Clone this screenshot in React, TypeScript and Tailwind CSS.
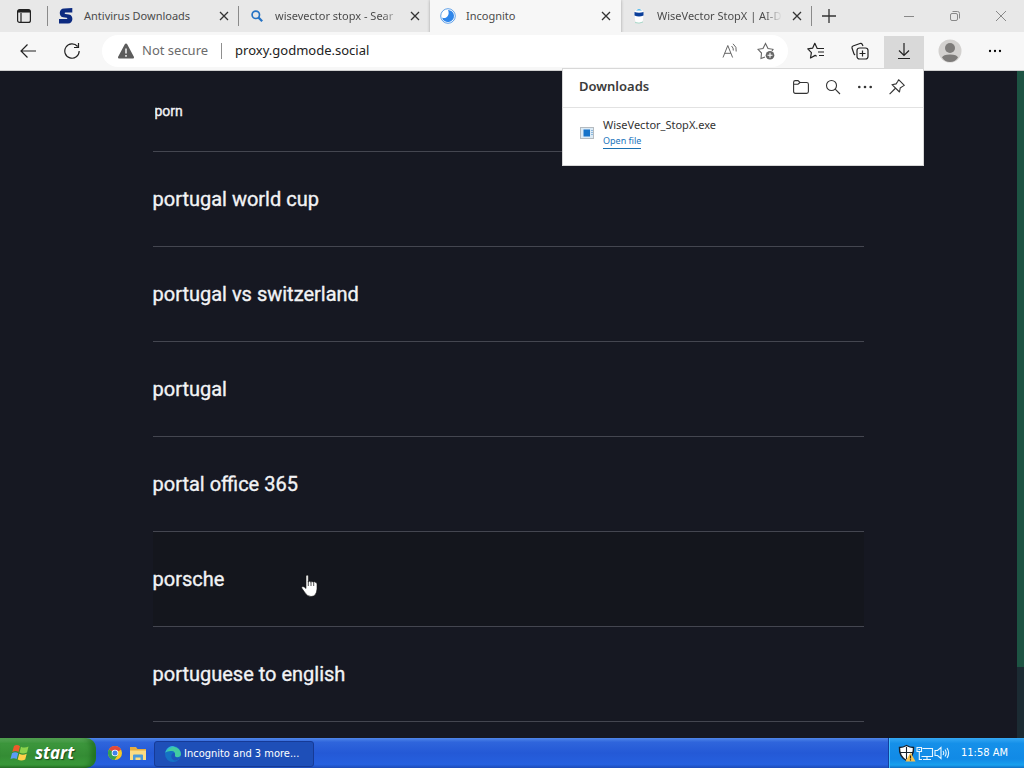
import type { ReactNode } from "react";

function CloseIcon() {
  return (
    <svg viewBox="0 0 10 10" className="size-[10px]" fill="none" stroke="#333" strokeWidth="1.3">
      <path d="M1 1l8 8M9 1l-8 8" />
    </svg>
  );
}

function BladeIcon() {
  return (
    <svg viewBox="0 0 16 18" className="h-[18px] w-4" fill="none">
      <path d="M14.3 1V5.4H7.4C6.400 5.400 6.400 6.900 7.400 7L11 7.600C15.800 8.400 15.600 16.600 10 16.600H1V12H8.600C9.600 12 9.600 11 8.600 10.800L5 10.200C0.400 9.200 .8 1.400 6 1.400Z" fill="#0c2a80" />
    </svg>
  );
}

function SearchFavicon() {
  return (
    <svg viewBox="0 0 16 16" className="size-4" fill="none" stroke="#2673c4">
      <circle cx="6.8" cy="6.8" r="3.7" strokeWidth="1.7" />
      <path d="M9.6 9.6l3.6 3.6" strokeWidth="2.2" />
    </svg>
  );
}

function MoonFavicon() {
  return (
    <svg viewBox="0 0 16 16" className="size-4" fill="none">
      <circle cx="8" cy="8" r="7.3" fill="#fff" stroke="#5d9fe8" strokeWidth="1" />
      <path d="M8 1.900A6.100 6.100 0 1 1 2 9.500C5.500 11.600 10.500 7.400 8 1.900Z" fill="#2f86ea" />
    </svg>
  );
}

function RobotFavicon() {
  return (
    <svg viewBox="0 0 16 16" className="size-4">
      <path d="M3.500 5Q4 1 8 1T12.500 5L12 12Q11.500 15 8 15T4 12Z" fill="#fff" />
      <path d="M4 14.500Q8 16 12 14" stroke="#a9d9c9" fill="none" />
      <path d="M5 2.500Q8 -0.500 11 2.500Z" fill="#49b4e8" />
      <path d="M3.500 4Q8 5.500 12.500 4V7.500Q8 9.500 3.500 7.500Z" fill="#0b3f9a" />
    </svg>
  );
}

type TabProps = { icon: ReactNode; title: string; active?: boolean; divider?: boolean; faded?: boolean };

function Tab({ icon, title, active, divider, faded }: TabProps) {
  return (
    <div
      className={
        "flex min-w-0 flex-1 items-center pl-[10px] pr-2 " +
        (active ? "relative -mb-1 bg-[#f7f7f7] pb-1 shadow-[0_0_3px_rgba(0,0,0,0.3)]" : "")
      }
    >
      <button className="flex min-w-0 flex-1 items-center gap-[10px] text-left">
        <span className="shrink-0">{icon}</span>
        <span
          className={
            "min-w-0 flex-1 whitespace-nowrap " +
            (faded ? "mask-[linear-gradient(to_right,black_calc(100%-18px),transparent)]" : "")
          }
        >
          {title}
        </span>
      </button>
      <button aria-label={"Close " + title} className="ml-2 p-[2px]">
        <CloseIcon />
      </button>
      {divider && <span className="-mr-2 ml-[7px] h-5 w-px bg-[#8a8a8a]" />}
    </div>
  );
}

function TabStrip() {
  return (
    <div className="flex h-8 shrink-0 bg-[#e8e8e8] text-[11px] text-[#4b4b4b]">
      <div className="flex w-12 items-center justify-between pl-4">
        <button aria-label="Tab actions">
          <svg viewBox="0 0 16 16" className="size-4" fill="none" stroke="#222" strokeWidth="1.2">
            <rect x="1.600" y="1.600" width="12.800" height="12.800" rx="2" />
            <path d="M1.500 4H14.500M5 5V14" />
            <path d="M2 3H14" strokeWidth="2.200" />
          </svg>
        </button>
        <span className="h-5 w-px bg-[#8a8a8a]" />
      </div>
      <div className="flex min-w-0 max-w-[764px] flex-1">
        <Tab icon={<BladeIcon />} title="Antivirus Downloads" divider />
        <Tab icon={<SearchFavicon />} title="wisevector stopx - Sear" faded />
        <Tab icon={<MoonFavicon />} title="Incognito" active />
        <Tab icon={<RobotFavicon />} title="WiseVector StopX | AI-D" divider faded />
      </div>
      <button aria-label="New tab" className="ml-[10px]">
        <svg viewBox="0 0 14 14" className="size-[14px]" stroke="#333" strokeWidth="1.300">
          <path d="M7 0V14M0 7H14" />
        </svg>
      </button>
      <div className="ml-auto flex items-center gap-[34px] pr-[17px]">
        <button aria-label="Minimize">
          <svg viewBox="0 0 12 12" className="size-3" stroke="#888"><path d="M1 6.500H11" /></svg>
        </button>
        <button aria-label="Restore">
          <svg viewBox="0 0 12 12" className="size-3" stroke="#888" fill="none">
            <rect x="1.500" y="3.500" width="7" height="7" rx="1.500" />
            <path d="M3.500 1.500H8.500Q10.500 1.500 10.500 3.500V8.500" />
          </svg>
        </button>
        <button aria-label="Close window">
          <svg viewBox="0 0 12 12" className="size-3" stroke="#888"><path d="M1 1L11 11M11 1L1 11" /></svg>
        </button>
      </div>
    </div>
  );
}

function DotsIcon({ className }: { className: string }) {
  return (
    <svg viewBox="0 0 16 16" className={className} fill="currentColor">
      <circle cx="2.300" cy="8" r="1.300" /><circle cx="8" cy="8" r="1.300" /><circle cx="13.700" cy="8" r="1.300" />
    </svg>
  );
}

function DownloadsFlyout() {
  return (
    <section
      aria-label="Downloads"
      className="absolute right-[100px] top-9 z-20 w-[362px] border border-[#d8d8d8] bg-white pb-4 text-[#333]"
    >
      <header className="flex h-[39px] items-center border-b border-[#e2e2e2] pb-[2px] pl-4 pr-[18px]">
        <h2 className="text-[13px] font-semibold text-[#3b3b3b]">Downloads</h2>
        <div className="ml-auto flex items-center gap-4">
          <button aria-label="Open downloads folder">
            <svg viewBox="0 0 16 16" className="size-4" fill="none" stroke="currentColor" strokeWidth="1.100">
              <path d="M.6 3.300Q.6 1.600 2.300 1.600H5L7 3.500H13.600Q15.400 3.500 15.400 5.200V12.600Q15.400 14.400 13.600 14.400H2.400Q.6 14.400 .6 12.600ZM.6 5.200H5L7 3.500" />
            </svg>
          </button>
          <button aria-label="Search downloads">
            <svg viewBox="0 0 16 16" className="size-4" fill="none" stroke="currentColor" strokeWidth="1.100">
              <circle cx="6.500" cy="6.500" r="5" /><path d="M10.200 10.200L15 15" />
            </svg>
          </button>
          <button aria-label="More options"><DotsIcon className="size-4" /></button>
          <button aria-label="Pin downloads">
            <svg viewBox="0 0 16 16" className="size-4" fill="none" stroke="currentColor" strokeWidth="1.100" strokeLinejoin="round">
              <path d="M9.600 .7L15.300 6.400L13.600 7.400L11.200 9L10.500 13L3 5.700L7.100 4.900L8.700 2.500ZM6.200 9.500L.6 15.200" />
            </svg>
          </button>
        </div>
      </header>
      <div className="flex items-center gap-[9px] pl-[17px] pt-[9px]">
        <svg viewBox="0 0 14 12" className="h-3 w-[14px]">
          <rect x=".5" y=".5" width="13" height="11" fill="#dcebf6" stroke="#b5bbc0" />
          <rect x="3.500" y="2.500" width="6.500" height="7" fill="#1673c9" />
          <path d="M11 3.500h2M11 5.500h2M11 7.500h2" stroke="#8db8de" />
        </svg>
        <div className="flex flex-col items-start">
          <span className="text-[11px] leading-4">WiseVector_StopX.exe</span>
          <a href="#" className="border-b border-[#1a6fb0] text-[9px] leading-[15px] text-[#1a75bd]">Open file</a>
        </div>
      </div>
    </section>
  );
}

function Toolbar() {
  return (
    <div className="relative flex h-[39px] shrink-0 items-center border-b border-[#cfcfcf] bg-[#f7f7f7] pl-5 pr-[22px] text-[#222]">
      <button aria-label="Back">
        <svg viewBox="0 0 16 16" className="size-4" fill="none" stroke="currentColor" strokeWidth="1.200"><path d="M16 8H1M7.500 1.500L1 8L7.500 14.500" /></svg>
      </button>
      <button aria-label="Refresh" className="ml-7">
        <svg viewBox="0 0 16 16" className="size-4" fill="none" stroke="currentColor" strokeWidth="1.200"><path d="M15.200 8A7.200 7.200 0 1 1 13.600 3.500M14.500 0V4.500H10" /></svg>
      </button>
      <form className="ml-[22px] flex h-8 min-w-0 flex-1 items-center rounded-full bg-white pl-[15px] pr-[13px] text-[13px]">
        <svg viewBox="0 0 18 16" className="h-4 w-[18px] shrink-0">
          <path d="M9 .5Q9.800 .5 10.200 1.300L17 14Q17.300 15.500 15.800 15.500H2.200Q.7 15.500 1 14L7.800 1.300Q8.200 .5 9 .5Z" fill="#5c5c5c" />
          <path d="M9 5.500V10.500M9 12V13.700" stroke="#fff" strokeWidth="1.400" />
        </svg>
        <span className="ml-[7px] whitespace-nowrap text-[#6b6b6b]">Not secure</span>
        <span className="ml-[13px] h-4 w-px bg-[#8f8f8f]" />
        <input aria-label="Address" defaultValue="proxy.godmode.social" className="ml-[13px] min-w-0 flex-1 bg-transparent text-[#222] outline-none" />
        <button type="button" aria-label="Read aloud" className="text-[#666]">
          <svg viewBox="0 0 16 16" className="size-4" fill="none" stroke="currentColor" strokeWidth="1">
            <path d="M1 14.500L5.800 2.500L10.600 14.500M2.700 10.300H8.900M9.600 3Q11.700 5 11.300 7.500M11 .8Q15.200 4 14.200 8.500" />
          </svg>
        </button>
        <button type="button" aria-label="Add to favorites" className="ml-[19px] text-[#666]">
          <svg viewBox="0 0 18 18" className="size-[18px]" fill="none" stroke="currentColor" strokeWidth="1.100">
            <path d="M8 15L4 16.500L4.500 11L1 7.300L6 6.500L8.500 1.500L11 6.500L16 7.300L15 9" />
            <circle cx="13" cy="13.300" r="4.300" fill="#666" stroke="none" />
            <path d="M13 10.800V15.800M10.500 13.300H15.500" stroke="#fff" />
          </svg>
        </button>
      </form>
      <button aria-label="Favorites" className="ml-[19px]">
        <svg viewBox="0 0 18 18" className="size-[18px]" fill="none" stroke="currentColor" strokeWidth="1.200" strokeLinejoin="round">
          <path d="M17 6.500H10.200L7.800 1.300L5.600 6.200L.8 6.900L4.400 10.600L3.500 16L8.200 13.400L9.700 14.200M11 10H17M12 13.500H17" />
        </svg>
      </button>
      <button aria-label="Collections" className="ml-[26px]">
        <svg viewBox="0 0 18 18" className="size-[18px]" fill="none" stroke="currentColor" strokeWidth="1.200">
          <rect x="6" y="6" width="11" height="11" rx="2.500" />
          <path d="M11.500 8.500V14.500M8.500 11.500H14.500M4 13L3 12L1 6Q.7 4.500 2 4L9 1.500Q10.500 1 11.200 2.300L12 4" />
        </svg>
      </button>
      <button aria-label="Downloads" className="ml-[15px] mt-1 flex h-[35px] w-10 items-center justify-center bg-[#d9d9d9]">
        <svg viewBox="0 0 16 18" className="-mt-1 h-[18px] w-4" fill="none" stroke="currentColor" strokeWidth="1.200">
          <path d="M8 1V13M3 8.500L8 13.500L13 8.500M2 16.500H14" />
        </svg>
      </button>
      <button aria-label="Profile" className="ml-[14px]">
        <svg viewBox="0 0 24 24" className="size-6">
          <circle cx="12" cy="12" r="11.500" fill="#d3d1cf" />
          <circle cx="12" cy="9" r="5" fill="#7d7b79" />
          <path d="M4 18.500Q5 15.500 12 15.500T20 18.500Q17 23 12 23T4 18.500Z" fill="#7d7b79" />
        </svg>
      </button>
      <button aria-label="Settings and more" className="ml-[26px]"><DotsIcon className="size-[14px] text-black" /></button>
      <DownloadsFlyout />
    </div>
  );
}

const suggestions = [
  "portugal world cup",
  "portugal vs switzerland",
  "portugal",
  "portal office 365",
  "porsche",
  "portuguese to english",
];

function Page() {
  return (
    <div className="flex min-h-0 flex-1 bg-[#161822]">
      <main className="min-w-0 flex-1 overflow-hidden pr-px font-[Roboto,sans-serif] text-[#f2f3f5] [-webkit-text-stroke:0.35px_#f2f3f5]">
        <div className="mx-auto max-w-[711px]">
          <div className="flex h-[81px] items-center border-b border-[#444650]">
            <input aria-label="Search" defaultValue="porn" className="w-full bg-transparent pl-[2px] text-[14px] outline-none" />
          </div>
          <ul>
            {suggestions.map((text) => (
              <li key={text}>
                <a
                  href="#"
                  className={
                    "flex h-[95px] items-center border-b border-[#444650] text-[20px] " +
                    (text === "porsche" ? "bg-[#14161d]" : "")
                  }
                >
                  {text}
                </a>
              </li>
            ))}
          </ul>
        </div>
      </main>
      <div className="flex w-[7px] flex-col bg-[#1b2b33]">
        <div className="flex-[25] bg-[#1d5443]" />
        <div className="flex-[3]" />
      </div>
      <svg viewBox="0 0 17 24" className="absolute left-[301px] top-[574px] h-6 w-[17px]">
        <path d="M5 1.500Q6.800 .5 7.300 2V8Q8.500 6.500 9.800 8Q11 6.700 12.300 8.300Q13.500 7.200 15 8.500Q16 9 16 10.500V15Q15.500 22.500 10 22.500Q6 22.500 3.500 18L.7 14Q.3 12.300 2 12.500Q3.500 12.800 5 14.500Z" fill="#fff" stroke="#111" strokeWidth=".6" />
        <path d="M7.300 7V12M10 8V12M12.700 8.500V12" stroke="#222" strokeWidth=".8" />
      </svg>
    </div>
  );
}

function Taskbar() {
  return (
    <footer className="flex h-[30px] shrink-0 items-stretch bg-[linear-gradient(#4f86e8_0%,#2f65dc_14%,#2459d6_50%,#2660df_88%,#1d4bb8_100%)] font-['DejaVu_Sans_Condensed','DejaVu_Sans',sans-serif] text-[11px] text-white">
      <button className="flex w-24 items-center gap-[5px] rounded-r-[10px] bg-[linear-gradient(#5fae5f_0%,#3c963c_18%,#348c34_60%,#3a9a3a_90%,#2a742a_100%)] pl-[10px] shadow-[inset_-5px_0_5px_rgba(0,70,0,0.35)]">
        <svg viewBox="0 0 20 20" className="size-5">
          <path d="M4 3Q7 1 10 3.200L8.500 9Q5.500 7.200 2.300 9Z" fill="#ee5a2b" />
          <path d="M11 3.700Q14.500 5.500 18.500 3.500L17 9.500Q13 11.500 9.500 9.600Z" fill="#8bd24c" />
          <path d="M2 10.200Q5.200 8.500 8.200 10.300L6.700 16Q3.800 14.300 .5 16Z" fill="#5b9cf5" />
          <path d="M9.200 10.800Q13 12.700 16.700 10.700L15.200 16.500Q11.500 18.500 7.700 16.600Z" fill="#ffd04a" />
        </svg>
        <span className="font-['Open_Sans',sans-serif] text-[17px] font-bold italic [text-shadow:1px_1px_1px_rgba(0,0,0,0.5)]">start</span>
      </button>
      <div className="flex items-center gap-[7px] pl-3">
        <button aria-label="Chrome">
          <svg viewBox="0 0 14 14" className="size-[14px]">
            <circle cx="7" cy="7" r="7" fill="#f7c927" />
            <path d="M7 7L.9 3.500A7 7 0 0 1 13.100 3.700Z" fill="#e2483b" />
            <path d="M7 7L.9 3.500A7 7 0 0 0 6.500 14L10 8.700Z" fill="#35a053" />
            <circle cx="7" cy="7" r="3.300" fill="#fff" /><circle cx="7" cy="7" r="2.500" fill="#4182ea" />
          </svg>
        </button>
        <button aria-label="File Explorer">
          <svg viewBox="0 0 18 15" className="h-[15px] w-[18px]">
            <path d="M1 1H7L8.500 3H17V14H1Z" fill="#e5ad40" />
            <path d="M1 4.500H17V14H1Z" fill="#fbdc83" />
            <path d="M4 14V9.500Q4 8.500 5 8.500H13Q14 8.500 14 9.500V14H11.500V11.500H6.500V14Z" fill="#4a9bdb" />
          </svg>
        </button>
      </div>
      <button className="ml-[7px] mt-[3px] flex h-[26px] w-40 items-center gap-[3px] rounded-[3px] border border-[#163a96] bg-[#1e4fb8] pl-[10px] text-left">
        <svg viewBox="0 0 16 16" className="size-4 shrink-0">
          <circle cx="8" cy="8" r="8" fill="#1572c4" />
          <path d="M.3 6.500A8 8 0 0 1 16 8.500Q15.500 11.300 12 11.300Q9.300 11 10 9Q10.500 5.500 7 5Q3 4.500 .3 6.500Z" fill="#42cba2" />
          <path d="M.3 6.500A8 8 0 0 1 10 .3Q3 2 2 5.500Z" fill="#32b5d8" />
          <path d="M10 9Q9.500 11.500 12.500 11.700L15 11Q12 16 8.500 14Q5.500 12 6.500 9Q7.500 6.500 9.500 7Z" fill="#1d55bb" />
        </svg>
        <span className="whitespace-nowrap">Incognito and 3 more...</span>
      </button>
      <div className="ml-auto flex items-center border-l border-[#123f9e] bg-[linear-gradient(#35a8f3_0%,#1590e9_18%,#118ae6_70%,#18a0ee_90%,#0f70c4_100%)] pl-[9px] pr-4 shadow-[inset_1px_0_0_#42c0ff]">
        <svg viewBox="0 0 18 18" className="size-[18px]">
          <path d="M8.500 1.500Q12 3.500 15.500 3.500Q16 12.500 8.500 16.500Q1 12.500 1.500 3.500Q5 3.500 8.500 1.500Z" fill="#fff" stroke="#17202c" strokeWidth="1.400" />
          <path d="M8.500 3V15M2 8.500H15" stroke="#17202c" strokeWidth="1.100" />
          <path d="M12.500 8.500L17.500 17.500H7.500Z" fill="#f7c24d" />
          <path d="M12.500 11.500V14.500M12.500 15.300V16.500" stroke="#222" strokeWidth="1.200" />
        </svg>
        <svg viewBox="0 0 18 16" className="h-4 w-[18px]" fill="none" stroke="#e9f6ff" strokeWidth="1.100">
          <path d="M6.500 3.500H16.500V11.500H5.500M11 11.500V14.500M7 14.500H15M1 2.500H5.500V6.500H1ZM3.300 6.500V14.500H6M2.500 4.500H4" />
        </svg>
        <svg viewBox="0 0 16 16" className="size-4" fill="none" stroke="#e9f6ff" strokeWidth="1.100">
          <path d="M1 5.500H3.500L7 2.500V13.500L3.500 10.500H1ZM9 6Q10.500 8 9 10M11 4.500Q13.300 8 11 11.500M13 3Q16.300 8 13 13" />
        </svg>
        <time className="ml-[11px]">11:58 AM</time>
      </div>
    </footer>
  );
}

export default function App() {
  return (
    <div className="relative flex h-screen flex-col overflow-hidden font-['Noto_Sans',sans-serif]">
      <TabStrip />
      <Toolbar />
      <Page />
      <Taskbar />
    </div>
  );
}
